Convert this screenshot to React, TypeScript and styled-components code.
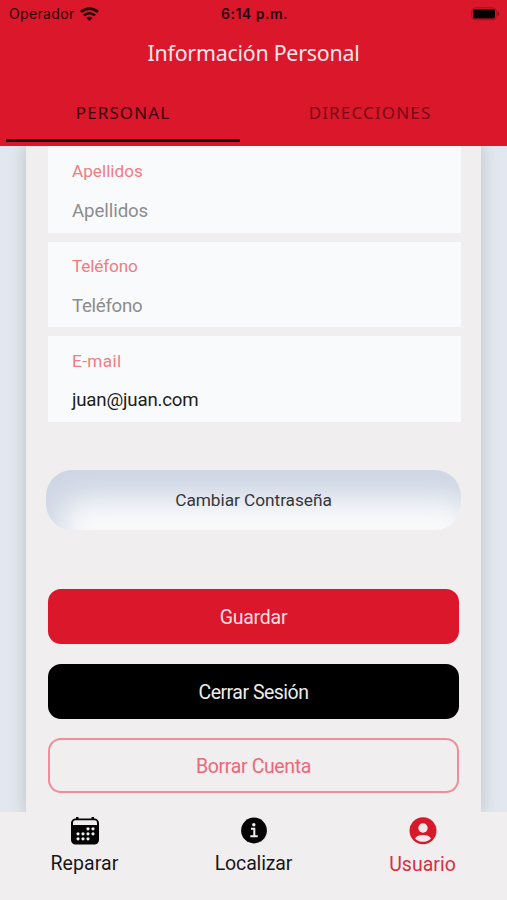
import React from "react";
import styled, { createGlobalStyle } from "styled-components";

const RED = "#da172b";

const GlobalStyle = createGlobalStyle`
  * { box-sizing: border-box; }
  body { margin: 0; background: #f0eeef; }
  button { font: inherit; letter-spacing: inherit; margin: 0; }
`;

const Screen = styled.div`
  width: 507px;
  height: 900px;
  overflow: hidden;
  display: flex;
  flex-direction: column;
  background: #f0eeef;
  font-family: Roboto, "Liberation Sans", sans-serif;
`;

const Header = styled.header`
  height: 145.5px;
  flex: none;
  background: ${RED};
  display: flex;
  flex-direction: column;
`;

const StatusBar = styled.div`
  height: 27px;
  padding: 0 7px 0 9px;
  display: grid;
  grid-template-columns: 1fr auto 1fr;
  align-items: center;
  color: #290308;
  font: 500 14px/27px Inter, sans-serif;
`;

const Carrier = styled.div`
  display: flex;
  align-items: center;
  gap: 5px;
  font-weight: 400;
  letter-spacing: 0.35px;
`;

const Clock = styled.div`
  font-weight: 600;
  letter-spacing: 0.5px;
`;

const Battery = styled.svg`
  justify-self: end;
`;

const Title = styled.h1`
  margin: 0;
  height: 52px;
  text-align: center;
  color: #fde6e8;
  font: 400 21.3px/52px "Noto Sans", sans-serif;
  letter-spacing: -0.2px;
`;

const Tabs = styled.nav`
  flex: 1;
  padding-left: 6px;
  display: grid;
  grid-template-columns: 234px 234px;
  column-gap: 13px;
`;

const Tab = styled.button<{ $active?: boolean; $spacing: number }>`
  border: 0;
  border-bottom: 3px solid ${(p) => (p.$active ? "#17040a" : "transparent")};
  margin-bottom: 4px;
  padding: 8px 0 0;
  background: none;
  color: ${(p) => (p.$active ? "#38040b" : "#790914")};
  font: 400 17px/24px "Noto Sans", sans-serif;
  letter-spacing: ${(p) => p.$spacing}px;
`;

const Content = styled.main`
  flex: none;
  height: 666.5px;
  overflow: hidden;
  padding: 0 26px;
  background: #e3e7ef;
`;

const Card = styled.section`
  height: 100%;
  padding: 0 20px;
  background: #f0eeef;
  box-shadow: 0 0 14px 2px rgba(150, 155, 160, 0.4);
  display: flex;
  flex-direction: column;
`;

const Fields = styled.div`
  padding-left: 2px;
  display: flex;
  flex-direction: column;
  gap: 9px;
`;

const Field = styled.label<{ $clipped?: boolean }>`
  height: ${(p) => (p.$clipped ? 87 : 85.5)}px;
  padding: ${(p) => (p.$clipped ? 14.5 : 13.5)}px 24px 0;
  background: #f9fafc;
  display: flex;
  flex-direction: column;
  gap: 16.5px;
`;

const Label = styled.span<{ $spacing: number }>`
  color: #ef7d82;
  font-size: 17.2px;
  line-height: 22px;
  letter-spacing: ${(p) => p.$spacing}px;
`;

const Value = styled.span<{ $filled?: boolean; $spacing: number }>`
  color: ${(p) => (p.$filled ? "#1d1e20" : "#8b8d8e")};
  font-size: 18.7px;
  line-height: 24px;
  letter-spacing: ${(p) => p.$spacing}px;
`;

const SoftButton = styled.button`
  flex: none;
  height: 60px;
  margin-top: 48.5px;
  border: 0;
  border-radius: 26px;
  background: #f9fafb;
  box-shadow: inset 13px 28px 30px #ced6e4;
  color: #34373c;
  font-size: 17.3px;
  letter-spacing: -0.05px;
`;

const Actions = styled.div`
  margin-top: 59px;
  padding: 0 2px;
  display: flex;
  flex-direction: column;
  gap: 19.5px;
`;

const ActionButton = styled.button<{ $tone: "primary" | "dark" | "outline"; $spacing: number }>`
  height: 55px;
  padding: 2px 0 0;
  border: 2px solid ${(p) => ({ primary: RED, dark: "#000", outline: "#f18d9b" })[p.$tone]};
  border-radius: 13px;
  background: ${(p) => ({ primary: RED, dark: "#000", outline: "transparent" })[p.$tone]};
  color: ${(p) => ({ primary: "#fbdfe1", dark: "#ececec", outline: "#ef667a" })[p.$tone]};
  font-size: 19.5px;
  letter-spacing: ${(p) => p.$spacing}px;
`;

const BottomNav = styled.nav`
  flex: 1;
  background: #f0eeef;
  display: grid;
  grid-template-columns: repeat(3, 169px);
`;

const NavItem = styled.button<{ $active?: boolean; $spacing: number }>`
  border: 0;
  padding: 4px 0 0;
  background: none;
  color: ${(p) => (p.$active ? "#d8303f" : "#18181a")};
  display: flex;
  flex-direction: column;
  align-items: center;
  gap: ${(p) => (p.$active ? 6 : 5)}px;
  font-size: 19.5px;
  line-height: 26px;
  letter-spacing: ${(p) => p.$spacing}px;
`;

const WifiIcon = () => (
  <svg width="19" height="14" viewBox="0 0 19 14" fill="none" stroke="#250308" strokeWidth="2.7">
    <path d="M1 4.900C5.800.4 13.200.4 18 4.900" />
    <path d="M4 8.400c3-2.900 8-2.900 11 0" />
    <path d="M6.500 11c1.700-1.600 4.300-1.600 6 0L9.500 14z" fill="#250308" stroke="none" />
  </svg>
);

const BatteryIcon = () => (
  <Battery width="29" height="14" viewBox="0 0 29 14">
    <rect x=".8" y=".8" width="24.400" height="12" rx="3.200" fill="none" stroke="#a51120" />
    <rect x="2" y="2.200" width="22" height="9.200" rx="1.600" fill="#080001" />
    <path d="M26.500 4.600c2.200 1 2.200 3.600 0 4.600z" fill="#850d19" />
  </Battery>
);

const DOTS = [
  [18, 12.8], [23, 12.8],
  [8, 17.8], [13, 17.8], [18, 17.8], [23, 17.8],
  [8, 22.8], [13, 22.8], [18, 22.8],
];

const CalendarIcon = () => (
  <svg width="30" height="30" viewBox="0 0 30 30">
    <path d="M6 1h2.500v1.500h13V1H24v1.500a4.500 4.500 0 0 1 5 4.500V24a4.500 4.500 0 0 1-4.500 4.500h-19A4.500 4.500 0 0 1 1 24V7A4.500 4.500 0 0 1 6 2.500z" fill="#050505" />
    <path d="M3 9V6.500a2.300 2.300 0 0 1 2.300-2.300h19.400A2.300 2.300 0 0 1 27 6.500V9z" fill="#f0eeef" />
    {DOTS.map(([x, y]) => <circle key={`${x}-${y}`} cx={x} cy={y} r="1.600" fill="#f0eeef" />)}
  </svg>
);

const InfoIcon = () => (
  <svg width="30" height="30" viewBox="0 0 30 30">
    <circle cx="15" cy="14.500" r="12.900" fill="#050505" />
    <circle cx="14.800" cy="8.800" r="1.700" fill="#f0eeef" />
    <path d="M12 12.800h3.300v7.200M11.300 20.300h7.400" fill="none" stroke="#f0eeef" strokeWidth="2" />
  </svg>
);

const UserIcon = () => (
  <svg width="30" height="30" viewBox="0 0 30 30">
    <circle cx="15" cy="14.800" r="13.500" fill="#d8182b" />
    <circle cx="15" cy="12" r="4.700" fill="#f3e7e9" />
    <path d="M7 22.400c2-4.600 14-4.600 16 0a11 11 0 0 1-16 0z" fill="#f3e7e9" />
  </svg>
);

export default function App() {
  return (
    <Screen>
      <GlobalStyle />
      <Header>
        <StatusBar>
          <Carrier>Operador <WifiIcon /></Carrier>
          <Clock>6:14 p.m.</Clock>
          <BatteryIcon />
        </StatusBar>
        <Title>Información Personal</Title>
        <Tabs>
          <Tab $active $spacing={1.1}>PERSONAL</Tab>
          <Tab $spacing={1.15}>DIRECCIONES</Tab>
        </Tabs>
      </Header>
      <Content>
        <Card>
          <Fields>
            <Field $clipped>
              <Label $spacing={0}>Apellidos</Label>
              <Value $spacing={-0.1}>Apellidos</Value>
            </Field>
            <Field>
              <Label $spacing={-0.15}>Teléfono</Label>
              <Value $spacing={-0.3}>Teléfono</Value>
            </Field>
            <Field>
              <Label $spacing={0.4}>E-mail</Label>
              <Value $filled $spacing={-0.2}>juan@juan.com</Value>
            </Field>
          </Fields>
          <SoftButton>Cambiar Contraseña</SoftButton>
          <Actions>
            <ActionButton $tone="primary" $spacing={-0.25}>Guardar</ActionButton>
            <ActionButton $tone="dark" $spacing={-0.5}>Cerrar Sesión</ActionButton>
            <ActionButton $tone="outline" $spacing={-0.35}>Borrar Cuenta</ActionButton>
          </Actions>
        </Card>
      </Content>
      <BottomNav>
        <NavItem $spacing={0.1}><CalendarIcon />Reparar</NavItem>
        <NavItem $spacing={-0.15}><InfoIcon />Localizar</NavItem>
        <NavItem $active $spacing={0}><UserIcon />Usuario</NavItem>
      </BottomNav>
    </Screen>
  );
}
